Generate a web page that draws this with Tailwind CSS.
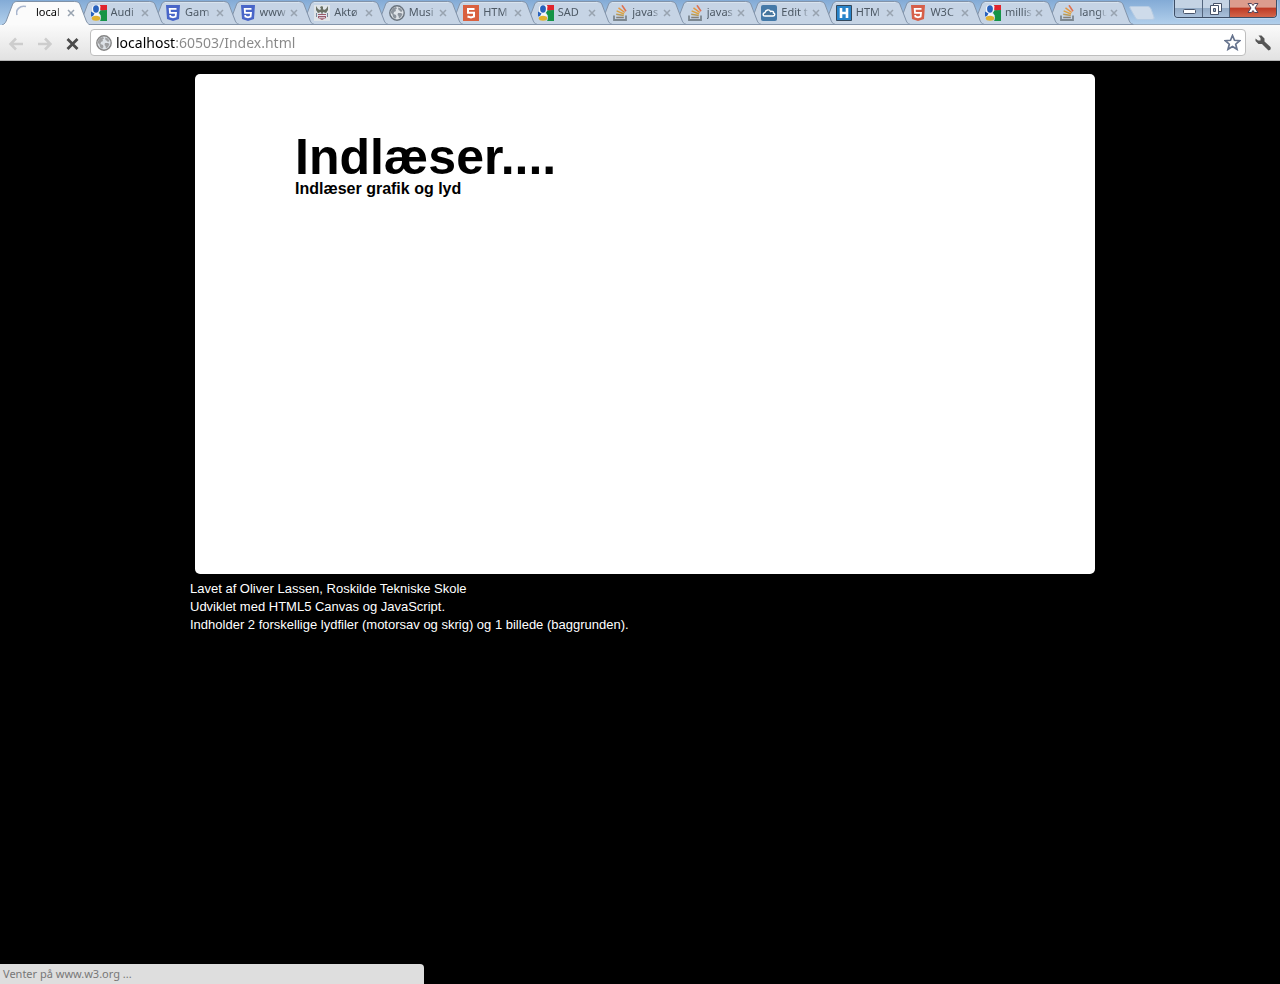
<!DOCTYPE html>
<html lang="da">
<head>
<meta charset="utf-8">
<title>localhost:60503/Index.html</title>
<script src="https://cdn.jsdelivr.net/npm/@tailwindcss/browser@4"></script>
</head>
<body class="flex min-h-screen flex-col bg-black font-['Noto_Sans',sans-serif]">

<svg class="absolute size-0" aria-hidden="true">
  <symbol id="tab" viewBox="0 0 91 25" preserveAspectRatio="none">
    <path d="M2 24.500C5 24 6 22 7 19L12 6C13 3 14 1.500 17 1.500H75C79 1.500 80 3 81 6L86 19C87 22 88 24 91 24.500Z" fill="#c6d4e5" stroke="#8293a9"/>
    <path d="M16 2.500H76" stroke="#d9e4ef"/>
  </symbol>
  <symbol id="x" viewBox="0 0 8 8"><path d="M1 1L7 7M7 1L1 7" stroke="currentColor" stroke-width="1.500"/></symbol>
  <symbol id="google" viewBox="0 0 16 16">
    <path d="M9 0H16V5L11 6L8 4Z" fill="#e0242d"/><path d="M9 5.500L16 5V16H9C11 13 10 10 8 8Z" fill="#159447"/>
    <path d="M3 0H8L9.500 1L9 6L7 8L9.500 10.500L8 12L5 11L1 12L3 9L1 7V2Z" fill="#f3f6fa"/>
    <ellipse cx="5" cy="4" rx="2.900" ry="3.700" fill="#2862bd"/><path d="M0 6.500L3.500 8.500L2 11L0 11.500Z" fill="#2862bd"/>
    <ellipse cx="5" cy="13.300" rx="4.200" ry="2.500" fill="#e0b22f"/>
  </symbol>
  <symbol id="shield" viewBox="0 0 16 16">
    <path d="M1 0H15L14 14L8 16L2 14Z" fill="currentColor"/><path d="M11.500 3.800H4.700L5 7.800H11L10.600 11.500L8 12.400L5.400 11.500L5.200 10" fill="none" stroke="#fff" stroke-width="1.800"/>
  </symbol>
  <symbol id="square5" viewBox="0 0 16 16">
    <path d="M0 0H16V16H0Z" fill="#d9603f"/><path d="M11.500 4H5V7.800H11V11.500L8 12.500L4.500 11.500" fill="none" stroke="#fff" stroke-width="2"/>
  </symbol>
  <symbol id="globe" viewBox="0 0 16 16">
    <circle cx="8" cy="8" r="7.200" fill="#dde2e7" stroke="currentColor" stroke-width="1.400"/>
    <path d="M2 6L4 3L7 2L8 3.500L6.500 4.500L7 6L5 7L4.500 9L7 10L7.500 12L6 14L4 12L3.500 9.500L2 8ZM9 2.500L12 3.500L13.500 6L12 7L10.500 5.500L9.500 5ZM9 8L12 8L13.500 9L12 12L10 13.500L9.500 11L8.500 10Z" fill="currentColor" opacity=".7"/>
  </symbol>
  <symbol id="stack" viewBox="0 0 16 16">
    <path d="M2 10.500V15H14V10.500" fill="none" stroke="#7c8790" stroke-width="1.800"/><path d="M4.200 12.500H11.800" stroke="#858078" stroke-width="1.500"/>
    <path d="M4.200 9.300L11.800 10.600" stroke="#b99b58" stroke-width="1.500"/><path d="M4.600 5.900L12 9" stroke="#dda340" stroke-width="1.500"/><path d="M6.500 2.800L12.700 7.500" stroke="#e6973d" stroke-width="1.500"/><path d="M10 .3L14 6.200" stroke="#df7150" stroke-width="1.600"/>
  </symbol>
  <symbol id="crest" viewBox="0 0 16 16">
    <path d="M0 0H16V16H0Z" fill="#dfe4e8"/><path d="M2 1L4 4L6 5L7 4L6 2L8 1L9 2V4L10 5L12 4L14 1L14 5L12 8L9 7L8 10L7 7L4 8L2 5Z" fill="#6a7064"/>
    <path d="M4 9H12V13L8 15L4 13Z" fill="#9a5a6a"/><path d="M4 10.500H12M5 12.800H11" stroke="#e4e4ec"/><path d="M2.500 8V12M13.500 8V12" stroke="#77869a"/>
  </symbol>
  <symbol id="cloud" viewBox="0 0 16 16">
    <rect width="16" height="16" rx="2" fill="#4479a8"/><path d="M4 11C1.500 11 1.500 8 4 7.500C4.500 4.500 8.500 4 9.500 6.500C12 5.700 13 7 12.500 8C14.500 8.500 14 11 12 11Z" fill="#44749c" stroke="#fff" stroke-width="1.400"/>
  </symbol>
  <symbol id="hbox" viewBox="0 0 16 16">
    <path d="M.5.5H15.500V15.500H.5Z" fill="#2884ca" stroke="#34485c"/><path d="M5 3V13M11 3V13M5 8H11" stroke="#fff" stroke-width="2.600"/>
  </symbol>
</svg>

<header class="shrink-0">
  <div class="flex h-[25px] bg-linear-to-b from-[#83abd6] to-[#b3d0ec]">
    <nav id="tabs" aria-label="Faner" class="flex min-w-0 flex-1"></nav>
    <div class="flex shrink-0 border-b border-[#98a9bb]">
      <button aria-label="Ny fane" class="ml-[10px] h-6 w-8">
        <svg class="h-6 w-8" viewBox="0 0 32 24"><path d="M3 6.500H20Q22 6.500 23 9L26 17Q27 19.500 24 19.500H10Q8 19.500 7 17L2 8Q1 6.500 3 6.500Z" fill="#cedbea" stroke="#b5cbe3"/></svg>
      </button>
      <div class="mr-[3px] ml-[14px] flex h-[18px] overflow-hidden rounded-b border border-t-0 border-[#3d4e66] shadow-[0_0_2px_#fff]">
        <button aria-label="Minimer" class="grid w-7 place-items-center border-r border-[#53657d] bg-linear-to-b from-[#c4d3e4] from-45% via-[#93abc6] via-50% to-[#a9c0da]">
          <svg class="h-4 w-6" viewBox="0 0 24 16"><rect x="6.500" y="8.500" width="12" height="4" rx="1" fill="#fff" stroke="#48546a"/></svg>
        </button>
        <button aria-label="Gendan" class="grid w-[27px] place-items-center border-r border-[#53657d] bg-linear-to-b from-[#c4d3e4] from-45% via-[#93abc6] via-50% to-[#a9c0da]">
          <svg class="h-4 w-6" viewBox="0 0 24 16"><path d="M9.500 2.500H17.500V10.500H9.500Z" fill="#fff" stroke="#48546a"/><path d="M6.500 4.500H14.500V13.500H6.500Z" fill="#fff" stroke="#48546a"/><path d="M9.500 7.500H11.500V10.500H9.500Z" fill="#9db1c8" stroke="#48546a"/></svg>
        </button>
        <button aria-label="Luk vindue" class="grid w-[46px] place-items-center bg-linear-to-b from-[#dc9c8d] from-40% via-[#be3b25] via-50% to-[#d3654a]">
          <svg class="h-4 w-6" viewBox="0 0 24 16"><path d="M7 2.500H10.500L12 4.500L13.500 2.500H17L14 7L17 11.500H13.500L12 9.500L10.500 11.500H7L10 7Z" fill="#fff" stroke="#51445a"/></svg>
        </button>
      </div>
    </div>
  </div>

  <div class="flex h-9 items-center border-b border-[#b5b5b5] bg-linear-to-b from-[#fafafa] to-[#e2e2e2] pl-2">
    <button aria-label="Tilbage" class="h-5 w-7 text-[#cdcdcd]"><svg class="mt-[2px] size-4" viewBox="0 0 16 16" fill="none" stroke="currentColor" stroke-width="2.500"><path d="M15 8H3M8 2.500L2.500 8L8 13.500"/></svg></button>
    <button aria-label="Frem" class="h-5 w-7 text-[#cdcdcd]"><svg class="mt-[2px] size-4" viewBox="0 0 16 16" fill="none" stroke="currentColor" stroke-width="2.500"><path d="M2 8H14M9 2.500L14.500 8L9 13.500"/></svg></button>
    <button aria-label="Stop" class="h-5 w-[26px] text-[#4b4b4b]"><svg class="mt-[2px] size-4" viewBox="0 0 16 16" fill="none" stroke="currentColor" stroke-width="2.800"><path d="M3.500 3L13.500 13M13.500 3L3.500 13"/></svg></button>
    <div class="flex h-[27px] min-w-0 flex-1 items-center rounded border border-[#bebebe] bg-white pr-1 pl-[5px]">
      <svg class="size-4 shrink-0 text-[#858585]"><use href="#globe"/></svg>
      <input aria-label="Adresse" value="localhost:60503/Index.html" class="ml-1 min-w-0 flex-1 bg-[linear-gradient(90deg,#000_60px,#888_60px)] bg-clip-text text-sm text-transparent outline-none">
      <button aria-label="Bogmærk" class="size-[17px]"><svg class="size-[17px]" viewBox="0 0 17 17"><path d="M8.500 1.500L10.500 6.300L15.700 6.700L11.700 10.200L13 15.300L8.500 12.500L4 15.300L5.300 10.200L1.300 6.700L6.500 6.300Z" fill="#fff" stroke="#66738d" stroke-width="1.700"/></svg></button>
    </div>
    <button aria-label="Indstillinger" class="grid w-[34px] place-items-center"><svg class="size-[18px]" viewBox="0 0 18 18"><path d="M4.500 1.500H7.500L10.500 4.500V7.500L16.500 13Q17.500 16 14.500 16.500L8 10H4.500L1.500 7V4.500L4 6.500H6.500V4Z" fill="#555"/></svg></button>
  </div>
</header>

<main class="flex-1 px-5 pt-[13px] font-['Liberation_Sans',Arial,sans-serif]">
  <div class="mx-auto max-w-[900px]">
    <section class="-mr-[5px] ml-[5px] min-h-[500px] rounded-[5px] bg-white px-[100px] pt-[58px] text-black">
      <h1 class="text-[50px] leading-[50px] font-bold">Indlæser....</h1>
      <p class="text-base leading-[14px] font-bold">Indlæser grafik og lyd</p>
    </section>
    <p class="mt-[6px] text-[13px] leading-[18px] text-white">Lavet af Oliver Lassen, Roskilde Tekniske Skole<br>Udviklet med HTML5 Canvas og JavaScript.<br>Indholder 2 forskellige lydfiler (motorsav og skrig) og 1 billede (baggrunden).</p>
  </div>
</main>

<footer class="h-5 w-[33%] min-w-[424px] max-w-[424px] rounded-tr bg-[#dedede] px-[3px] text-[11px] leading-5 text-[#777]">Venter på www.w3.org ...</footer>

<script>
  // Open tabs: icon symbol, visible title, icon colour.
  const tabs = [
    ['', 'local'], ['google', 'Audi'], ['shield', 'Gam', '#4865c8'], ['shield', 'www', '#4865c8'],
    ['crest', 'Aktø'], ['globe', 'Musi', '#68727c'], ['square5', 'HTM'], ['google', 'SAD'],
    ['stack', 'javas'], ['stack', 'javas'], ['cloud', 'Edit t'], ['hbox', 'HTM'],
    ['shield', 'W3C', '#d65f49'], ['google', 'millis'], ['stack', 'langu']
  ];
  const spinner = '<svg class="size-4 shrink-0" viewBox="0 0 16 16"><path d="M1 10C-1 5 4 0 10 1.500" fill="none" stroke="#a9b6ce" stroke-width="1.600"/></svg>';
  const activeShape = '<svg class="absolute top-0 left-0 -z-10 h-[25px] w-[calc(100%+16px)]" viewBox="0 0 91 25" preserveAspectRatio="none"><path d="M2 25C5 24 6 22 7 19L12 6C13 3 14 1.500 17 1.500H75C79 1.500 80 3 81 6L86 19C87 22 88 24 91 25" fill="#fbfbfb" stroke="#8092a8"/></svg>';
  const shape = '<svg class="absolute top-0 left-0 -z-10 h-[25px] w-[calc(100%+16px)]"><use href="#tab"/></svg>';
  document.getElementById('tabs').innerHTML = tabs.map(([icon, title, color], i) => `
    <div class="relative isolate flex min-w-0 flex-1 items-center pl-4" style="z-index:${tabs.length - i}">
      ${icon ? shape : activeShape}
      <a href="#" class="flex min-w-0 flex-1 items-center gap-1 ${icon ? 'text-[#4d5965]' : 'text-black'}">
        ${icon ? `<svg class="size-4 shrink-0" style="color:${color || 'inherit'}"><use href="#${icon}"/></svg>` : spinner}
        <span class="w-7 text-[11px] whitespace-nowrap mask-r-from-70%">${title}</span>
      </a>
      <button aria-label="Luk ${title}" class="size-2 shrink-0 text-[#98a3b0]"><svg class="size-2"><use href="#x"/></svg></button>
    </div>`).join('');
</script>
</body>
</html>
